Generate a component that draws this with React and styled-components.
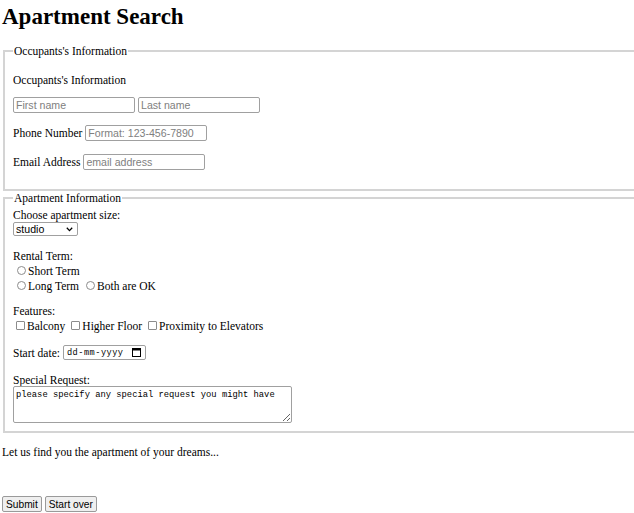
import React from "react";
import styled, { createGlobalStyle } from "styled-components";

const GlobalStyle = createGlobalStyle`
  html, body {
    margin: 0;
    padding: 0;
    background: #fff;
    overflow: hidden;
  }
  body {
    font-family: "Liberation Serif", "Times New Roman", serif;
    font-size: 11.5px;
    color: #000;
  }
`;

const Page = styled.form`
  padding-left: 2px;
  width: 760px;
`;

const Title = styled.h1`
  margin: 4px 0 14px;
  font-size: 23px;
  line-height: 26px;
  font-weight: bold;
`;

const Fieldset = styled.fieldset`
  margin: 0 0 0 1px;
  padding: 4px 8px ${(p) => p.$pb}px 8px;
  border: 2px solid #d4d4d4;
  min-width: 0;
`;

const Legend = styled.legend`
  padding: 0 1px;
  font-size: 11.5px;
  line-height: 14px;
`;

const Row = styled.div`
  display: flex;
  align-items: center;
  gap: 3px;
  height: ${(p) => p.$h || 14}px;
  margin-top: ${(p) => p.$mt || 0}px;
  line-height: 14px;
  white-space: nowrap;
`;

const TextInput = styled.input`
  box-sizing: border-box;
  width: 122px;
  height: 16px;
  margin: 0;
  padding: 0 2px;
  border: 1px solid #a0a0a0;
  border-radius: 2px;
  font-family: "Liberation Sans", Arial, sans-serif;
  font-size: 10.6px;
  color: #000;
  background: #fff;
  &::placeholder {
    color: #808080;
  }
`;

const SelectWrap = styled.span`
  position: relative;
  display: inline-flex;
  svg {
    position: absolute;
    right: 5px;
    top: 5px;
    pointer-events: none;
  }
`;

const Select = styled.select`
  appearance: none;
  box-sizing: border-box;
  width: 65px;
  height: 14px;
  margin: 0;
  padding: 0 0 0 2px;
  border: 1px solid #a0a0a0;
  border-radius: 2px;
  font-family: "Liberation Sans", Arial, sans-serif;
  font-size: 10.6px;
  line-height: 12px;
  color: #000;
  background: #fff;
`;

const Choice = styled.label`
  display: inline-flex;
  align-items: center;
`;

const Radio = styled.input.attrs({ type: "radio" })`
  appearance: none;
  box-sizing: border-box;
  width: 9px;
  height: 9px;
  margin: 0 2px 0 4px;
  border: 1px solid #8c8c8c;
  border-radius: 50%;
  background: #fff;
  &:checked {
    background: radial-gradient(circle, #0075ff 45%, #fff 50%);
  }
`;

const Check = styled.input.attrs({ type: "checkbox" })`
  appearance: none;
  box-sizing: border-box;
  width: 9px;
  height: 9px;
  margin: 0 2px 0 3px;
  border: 1px solid #8c8c8c;
  border-radius: 1px;
  background: #fff;
  &:checked {
    background: #0075ff;
    border-color: #0075ff;
  }
`;

const DateBox = styled.div`
  box-sizing: border-box;
  width: 83px;
  height: 15px;
  display: flex;
  align-items: center;
  justify-content: space-between;
  padding: 0 4px 0 3px;
  border: 1px solid #a0a0a0;
  border-radius: 2px;
  font-family: "Liberation Mono", "DejaVu Sans Mono", monospace;
  font-size: 8.6px;
  letter-spacing: 0.5px;
  color: #000;
`;

const TextArea = styled.textarea`
  box-sizing: border-box;
  width: 279px;
  height: 37px;
  margin: 0;
  padding: 3px 2px 2px;
  border: 1px solid #a0a0a0;
  border-radius: 2px;
  font-family: "Liberation Mono", "DejaVu Sans Mono", monospace;
  font-size: 8.8px;
  line-height: 10px;
  color: #000;
  resize: both;
`;

const Button = styled.button`
  box-sizing: border-box;
  height: 16px;
  margin: 0;
  padding: 0 3px;
  border: 1px solid #9a9a9a;
  border-radius: 2px;
  background: #efefef;
  font-family: "Liberation Sans", Arial, sans-serif;
  font-size: 10.2px;
  color: #000;
`;

const CalendarIcon = () => (
  <svg width="9" height="9" viewBox="0 0 9 9">
    <rect x="0.5" y="0.5" width="8" height="8" fill="none" stroke="#000" strokeWidth="1" />
    <rect x="0.5" y="0.5" width="8" height="2" fill="#000" />
  </svg>
);

const Chevron = () => (
  <svg width="7" height="5" viewBox="0 0 7 5">
    <path d="M0.8 0.8 L3.5 3.6 L6.2 0.8" fill="none" stroke="#000" strokeWidth="1.3" />
  </svg>
);

export default function App() {
  return (
    <>
      <GlobalStyle />
      <Page onSubmit={(e) => e.preventDefault()}>
        <Title>Apartment Search</Title>

        <Fieldset $pb={19}>
          <Legend>Occupants's Information</Legend>
          <Row $mt={11}>Occupants's Information</Row>
          <Row $mt={10} $h={16}>
            <TextInput placeholder="First name" />
            <TextInput placeholder="Last name" />
          </Row>
          <Row $mt={12} $h={16}>
            Phone Number
            <TextInput placeholder="Format: 123-456-7890" />
          </Row>
          <Row $mt={13} $h={16}>
            Email Address
            <TextInput placeholder="email address" />
          </Row>
        </Fieldset>

        <Fieldset $pb={8}>
          <Legend>Apartment Information</Legend>
          <Row $mt={-1}>Choose apartment size:</Row>
          <Row>
            <SelectWrap>
              <Select defaultValue="studio">
                <option value="studio">studio</option>
                <option value="1br">1 bedroom</option>
                <option value="2br">2 bedroom</option>
              </Select>
              <Chevron />
            </SelectWrap>
          </Row>
          <Row $mt={13}>Rental Term:</Row>
          <Row $h={15}>
            <Choice>
              <Radio name="term" />
              Short Term
            </Choice>
          </Row>
          <Row $h={15}>
            <Choice>
              <Radio name="term" />
              Long Term
            </Choice>
            <Choice>
              <Radio name="term" />
              Both are OK
            </Choice>
          </Row>
          <Row $mt={11}>Features:</Row>
          <Row $h={15}>
            <Choice>
              <Check />
              Balcony
            </Choice>
            <Choice>
              <Check />
              Higher Floor
            </Choice>
            <Choice>
              <Check />
              Proximity to Elevators
            </Choice>
          </Row>
          <Row $mt={12} $h={15}>
            Start date:
            <DateBox>
              <span>dd-mm-yyyy</span>
              <CalendarIcon />
            </DateBox>
          </Row>
          <Row $mt={13}>Special Request:</Row>
          <Row $mt={-1} $h={37}>
            <TextArea defaultValue="please specify any special request you might have" />
          </Row>
        </Fieldset>

        <Row $mt={12}>Let us find you the apartment of your dreams...</Row>
        <Row $mt={37} $h={16}>
          <Button type="submit">Submit</Button>
          <Button type="reset">Start over</Button>
        </Row>
      </Page>
    </>
  );
}
